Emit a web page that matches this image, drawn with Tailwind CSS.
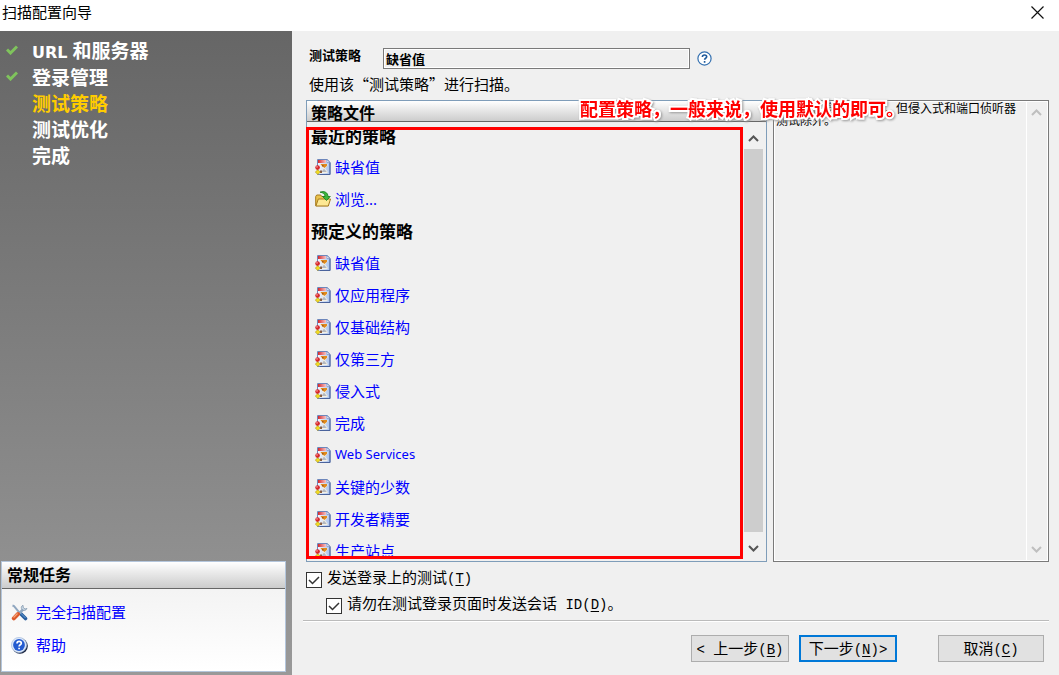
<!DOCTYPE html>
<html lang="zh-CN">
<head>
<meta charset="utf-8">
<title>扫描配置向导</title>
<script src="https://cdn.jsdelivr.net/npm/@tailwindcss/browser@4"></script>
</head>
<body class="flex h-screen flex-col overflow-hidden bg-[#f0f0f0] font-['Noto_Sans','Noto_Sans_CJK_SC',sans-serif] text-[15px] text-black">
<svg class="absolute size-0" aria-hidden="true">
  <defs>
    <linearGradient id="page" x1="0" x2="1"><stop offset="0" stop-color="#f6f9ff"/><stop offset="1" stop-color="#a9c2ec"/></linearGradient>
    <linearGradient id="band" x1="0" x2="1"><stop offset="0" stop-color="#d8262b"/><stop offset="1" stop-color="#f6c4c4"/></linearGradient>
  </defs>
  <symbol id="policy" viewBox="0 0 16 16">
    <path d="M2.500.5h9.700l2.800 2.800v12.200H2.500z" fill="url(#page)" stroke="#6e87bb"/>
    <path d="M15 3.500v12H5" fill="none" stroke="#4a639c"/>
    <path d="M3 1h8v3H3z" fill="url(#band)"/>
    <path d="M12 .8v2.700h2.800z" fill="#fff" stroke="#6e87bb" stroke-width=".6"/>
    <path d="M5 5h7.500v1.500L10 9.500l2.500 3V14H6.500v-1.500L8 9.500z" fill="#f5f0e2"/>
    <path d="M5.500 5h6.500v1.800L9.500 9 7 7z" fill="#e08a1c"/>
    <path d="M7 6h1.500v1.500H7z" fill="#9c5620"/>
    <path d="M9 9.500l2.800 3.500H6.500z" fill="#b3b8c2"/>
    <path d="M5 11.500h2V14H5z" fill="#8a5a44"/>
    <circle cx="2.600" cy="8.600" r="2.300" fill="#d8262b"/><circle cx="2" cy="7.900" r=".8" fill="#f79a9a"/>
    <path d="M2.800 10.700l2.500 2.400-2.500 2.400L.3 13.100z" fill="#f2dc20" stroke="#a68e14" stroke-width=".6"/>
  </symbol>
  <symbol id="up" viewBox="0 0 11 7"><path d="M1 6l4.500-4.500L10 6" fill="none" stroke="currentColor" stroke-width="2"/></symbol>
  <symbol id="down" viewBox="0 0 11 7"><path d="M1 1l4.500 4.500L10 1" fill="none" stroke="currentColor" stroke-width="2"/></symbol>
  <symbol id="done" viewBox="0 0 12 10"><path d="M1 4.500l3.500 3.500L11 1.500" fill="none" stroke="#7fc35c" stroke-width="3"/></symbol>
  <symbol id="tick" viewBox="0 0 16 16"><path d="M3 8l3.500 3.500L13 5" fill="none" stroke="#333" stroke-width="1.500"/></symbol>
</svg>

<header class="flex h-[31px] shrink-0 items-start justify-between bg-white pl-[2px] pr-[15px]">
  <h1 class="leading-[25px]">扫描配置向导</h1>
  <button type="button" aria-label="关闭" class="mt-[6px]">
    <svg class="size-[13px]" viewBox="0 0 13 13"><path d="M.5.5l12 12M12.500.5l-12 12" stroke="#111" stroke-width="1.200"/></svg>
  </button>
</header>

<div class="flex min-h-0 flex-1">
  <aside class="flex w-[292px] shrink-0 flex-col justify-between bg-linear-to-b from-[#666] to-[#999] pb-[3px] pl-[1px] pr-[6px]">
    <ol class="pt-[8px] text-[19px] font-bold text-white">
      <li class="flex h-[26px] items-center pl-[5px]"><svg class="mr-[14px] mb-[5px] h-[10px] w-[12px]"><use href="#done"/></svg><span class="leading-[26px]"><span class="font-['DejaVu_Sans',sans-serif] text-[16px]">URL</span> 和服务器</span></li>
      <li class="flex h-[26px] items-center pl-[5px]"><svg class="mr-[14px] mb-[5px] h-[10px] w-[12px]"><use href="#done"/></svg>登录管理</li>
      <li class="flex h-[26px] items-center pl-[31px] text-[#ffcc00]" aria-current="step">测试策略</li>
      <li class="flex h-[26px] items-center pl-[31px]">测试优化</li>
      <li class="flex h-[26px] items-center pl-[31px]">完成</li>
    </ol>
    <section class="h-[111px] border border-[#b4c6dc] bg-linear-to-b from-[#f0f0f0] to-white">
      <h2 class="h-[27px] border-b border-[#666] bg-linear-to-b from-white to-[#ccc] pl-[5px] text-[16px] leading-[27px] font-bold">常规任务</h2>
      <nav class="flex flex-col pt-[7px] pl-[9px] text-[#0000ff]">
        <a href="#" class="flex h-[33px] items-center gap-[8px]">
          <svg class="size-[17px]" viewBox="0 0 17 17">
            <path d="M1.500 1.500l1.500.5 5 6 1.500 2" fill="none" stroke="#8fa6bf" stroke-width="2"/>
            <path d="M9.500 9.500l5 5" stroke="#265d9e" stroke-width="3.600" stroke-linecap="round"/>
            <path d="M9.500 9l5 5" stroke="#6ba3d8" stroke-width="1"/>
            <path d="M8 9.500l5-5" stroke="#8fa9c2" stroke-width="2.500"/>
            <path d="M12 1.200c-2 1-2.300 3-.8 4.400s4 1 4.800-1.200l-2 .6-1.700-1.500z" fill="#c7d5e2" stroke="#7d94ab" stroke-width=".7"/>
            <path d="M7 10L2.800 14.300" stroke="#dc592b" stroke-width="4" stroke-linecap="round"/>
            <path d="M6.500 9.500l-4 4" stroke="#f7a477" stroke-width="1.200"/>
          </svg>完全扫描配置</a>
        <a href="#" class="flex h-[33px] items-center gap-[8px]">
          <svg class="size-[17px]" viewBox="0 0 17 17">
            <circle cx="9" cy="9" r="7.800" fill="#17233f"/><circle cx="8" cy="8" r="7.600" fill="#dce8f8" stroke="#a9bfe0" stroke-width=".7"/><circle cx="8" cy="8" r="5.900" fill="#235bd0"/>
            <path d="M6 6.500c0-3 4.300-2.700 4.300-.3 0 1.600-2.200 1.500-2.200 3.300M8.100 10.700v1.600" fill="none" stroke="#fff" stroke-width="1.700"/>
          </svg>帮助</a>
      </nav>
    </section>
  </aside>

  <main class="flex min-w-0 flex-1 flex-col pt-[17px] pr-[10px] pl-[14px]">
    <div class="flex h-[21px] shrink-0 items-center pl-[3px] text-[13px] font-bold">
      <label for="policyName" class="mb-[5px] w-[74px]">测试策略</label>
      <input id="policyName" readonly value="缺省值" class="h-[21px] w-[307px] border border-[#7a7a7a] bg-[#f0f0f0] pl-[2px] shadow-[inset_0_0_0_1px_#fff]">
      <button type="button" aria-label="帮助" class="ml-[7px]">
        <svg class="size-[15px]" viewBox="0 0 15 15"><circle cx="7.500" cy="7.500" r="6.600" fill="#fff" stroke="#3470b0" stroke-width="1.200"/><path d="M5.400 6c0-2.800 4.300-2.600 4.300-.2 0 1.500-2.100 1.400-2.100 3M7.600 10v1.700" fill="none" stroke="#1e5a9c" stroke-width="1.600"/></svg>
      </button>
    </div>
    <p class="h-[31px] shrink-0 pl-[3px] leading-[29px] font-['Noto_Sans_CJK_SC',sans-serif]">使用该“测试策略”进行扫描。</p>

    <div class="relative grid min-h-0 flex-1 grid-cols-[461fr_276fr] gap-[6px]">
      <section class="flex min-h-0 min-w-0 flex-col border border-[#7f9db9]">
        <h2 class="h-[21px] shrink-0 border-b border-[#666] bg-linear-to-b from-white to-[#ccc] pl-[4px] text-[16px] leading-[24px] font-bold">策略文件</h2>
        <div class="flex min-h-0 flex-1">
          <div class="mb-[2px] flex-1 overflow-hidden pl-[4px] text-[#0000ff]">
            <h3 class="h-[29px] text-[17px] leading-[29px] font-bold text-black">最近的策略</h3>
            <a href="#" class="flex h-[32px] items-center gap-[4px] pl-[4px]"><svg class="size-[16px]"><use href="#policy"/></svg>缺省值</a>
            <a href="#" class="flex h-[32px] items-center gap-[4px] pl-[4px]">
              <svg class="size-[16px]" viewBox="0 0 16 16">
                <path d="M.7 5.500l1-1.500h4l1 1.500h6.500v9.200H.7z" fill="#eac34e" stroke="#a67a1d"/>
                <path d="M3.300 8h12.200l-2.200 7H.9z" fill="#fde894" stroke="#a67a1d"/>
                <path d="M5 1.200C9-.5 13 1.500 13 5.500h2.300L11.500 9.500 7.500 5.500H10C10 3 8 1.500 5 1.200z" fill="#3eb53b" stroke="#187d20" stroke-width=".8"/>
              </svg>浏览...</a>
            <h3 class="h-[32px] text-[17px] leading-[34px] font-bold text-black">预定义的策略</h3>
            <a href="#" class="flex h-[32px] items-center gap-[4px] pl-[4px]"><svg class="size-[16px]"><use href="#policy"/></svg>缺省值</a>
            <a href="#" class="flex h-[32px] items-center gap-[4px] pl-[4px]"><svg class="size-[16px]"><use href="#policy"/></svg>仅应用程序</a>
            <a href="#" class="flex h-[32px] items-center gap-[4px] pl-[4px]"><svg class="size-[16px]"><use href="#policy"/></svg>仅基础结构</a>
            <a href="#" class="flex h-[32px] items-center gap-[4px] pl-[4px]"><svg class="size-[16px]"><use href="#policy"/></svg>仅第三方</a>
            <a href="#" class="flex h-[32px] items-center gap-[4px] pl-[4px]"><svg class="size-[16px]"><use href="#policy"/></svg>侵入式</a>
            <a href="#" class="flex h-[32px] items-center gap-[4px] pl-[4px]"><svg class="size-[16px]"><use href="#policy"/></svg>完成</a>
            <a href="#" class="flex h-[32px] items-center gap-[4px] pl-[4px] text-[13px]"><svg class="size-[16px]"><use href="#policy"/></svg>Web Services</a>
            <a href="#" class="flex h-[32px] items-center gap-[4px] pl-[4px]"><svg class="size-[16px]"><use href="#policy"/></svg>关键的少数</a>
            <a href="#" class="flex h-[32px] items-center gap-[4px] pl-[4px]"><svg class="size-[16px]"><use href="#policy"/></svg>开发者精要</a>
            <a href="#" class="flex h-[32px] items-center gap-[4px] pl-[4px]"><svg class="size-[16px]"><use href="#policy"/></svg>生产站点</a>
          </div>
          <div class="mr-[3px] flex w-[19px] flex-col text-[#555]">
            <button type="button" aria-label="向上滚动" class="flex h-[27px] items-center justify-center pt-[6px]"><svg class="h-[7px] w-[11px]"><use href="#up"/></svg></button>
            <div class="flex-1 bg-[#cdcdcd]"></div>
            <button type="button" aria-label="向下滚动" class="flex h-[29px] items-center justify-center pt-[3px]"><svg class="h-[7px] w-[11px]"><use href="#down"/></svg></button>
          </div>
        </div>
      </section>

      <section class="flex min-w-0 border border-[#7a7a7a] shadow-[inset_0_0_0_1px_#fff]">
        <textarea readonly aria-label="策略说明" class="min-w-0 flex-1 resize-none overflow-hidden pt-[2px] pl-[2px] text-[12px] leading-[12px]">该策略包含所有测试，但侵入式和端口侦听器测试除外。</textarea>
        <div class="flex w-[22px] flex-col items-center justify-between border-l border-white pt-[8px] pr-[3px] pb-[8px] text-[#bfbfbf]">
          <svg class="h-[7px] w-[11px]"><use href="#up"/></svg>
          <svg class="h-[7px] w-[11px]"><use href="#down"/></svg>
        </div>
      </section>

      <div class="pointer-events-none absolute top-[27px] bottom-[3px] left-0 w-[437px] border-3 border-[#ff0000]"></div>
      <p class="pointer-events-none absolute -top-[4px] left-[274px] text-[18px] leading-[26px] font-bold whitespace-nowrap text-[#ff0000] [paint-order:stroke_fill] [-webkit-text-stroke:4px_white] drop-shadow-[1px_1px_1px_#999]">配置策略，一般来说，使用默认的即可。</p>
    </div>

    <div class="flex shrink-0 flex-col pt-[4px]">
      <label class="flex h-[26px] items-center gap-[5px]">
        <span class="mt-[2px] grid size-[16px]"><input type="checkbox" checked class="col-start-1 row-start-1 size-[16px] appearance-none border border-[#333] bg-white"><svg class="pointer-events-none col-start-1 row-start-1 size-[16px]"><use href="#tick"/></svg></span>
        <span class="pb-[2px]">发送登录上的测试<span class="font-['Liberation_Mono',monospace] text-[14px]">(<u class="underline-offset-2">T</u>)</span></span>
      </label>
      <label class="flex h-[26px] items-center gap-[5px] pl-[20px]">
        <span class="mt-[2px] grid size-[16px]"><input type="checkbox" checked class="col-start-1 row-start-1 size-[16px] appearance-none border border-[#333] bg-white"><svg class="pointer-events-none col-start-1 row-start-1 size-[16px]"><use href="#tick"/></svg></span>
        <span class="pb-[2px]">请勿在测试登录页面时发送会话<span class="font-['Liberation_Mono',monospace] text-[14px]"> ID(<u class="underline-offset-2">D</u>)</span>。</span>
      </label>
    </div>
    <footer class="mt-[2px] -ml-[3px] flex shrink-0 justify-end border-t border-[#bbb] pt-[14px] pr-[5px] pb-[13px] shadow-[inset_0_1px_0_#fff]">
      <button type="button" class="h-[27px] w-[98px] border border-[#adadad] bg-[#e1e1e1] leading-[22px]"><span class="font-['Liberation_Mono',monospace] text-[14px]">&lt; </span>上一步<span class="font-['Liberation_Mono',monospace] text-[14px]">(<u class="underline-offset-2">B</u>)</span></button>
      <button type="button" class="ml-[10px] h-[27px] w-[98px] border-2 border-[#0078d7] bg-[#e1e1e1] leading-[20px]">下一步<span class="font-['Liberation_Mono',monospace] text-[14px]">(<u class="underline-offset-2">N</u>)&gt;</span></button>
      <button type="button" class="ml-[41px] h-[27px] w-[106px] border border-[#adadad] bg-[#e1e1e1] leading-[22px]">取消<span class="font-['Liberation_Mono',monospace] text-[14px]">(<u class="underline-offset-2">C</u>)</span></button>
    </footer>
  </main>
</div>
</body>
</html>
